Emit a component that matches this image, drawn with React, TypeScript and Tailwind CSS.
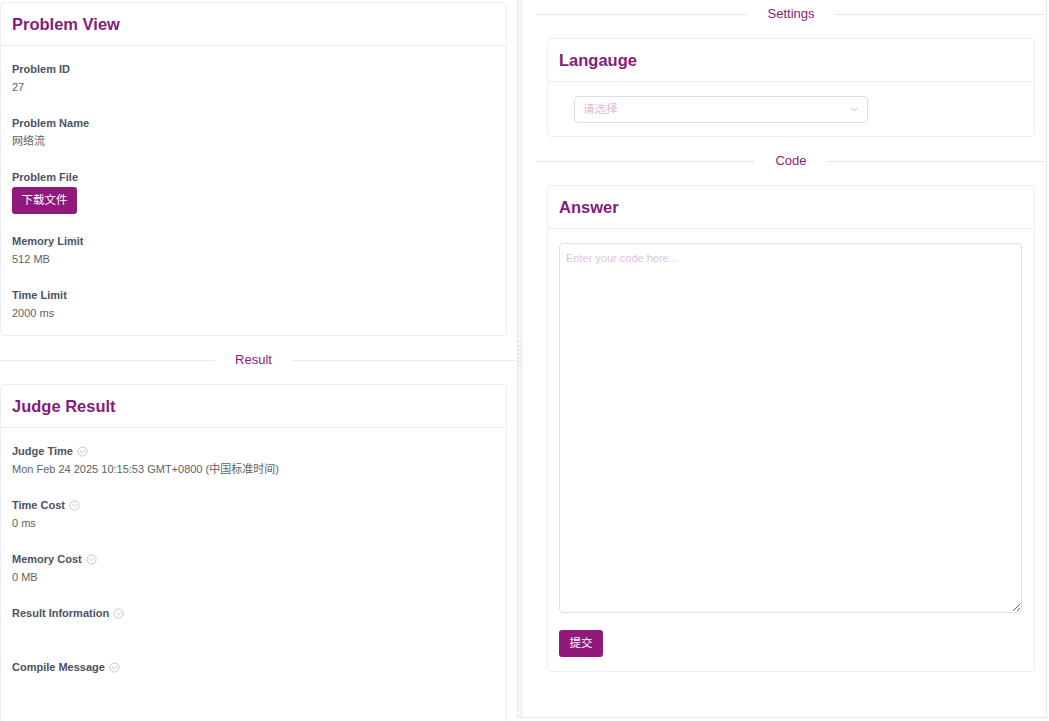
import React from 'react';

const font = { fontFamily: '"Liberation Sans", "Noto Sans CJK SC", sans-serif' };

const HelpIcon: React.FC = () => (
  <svg width="11" height="11" viewBox="0 0 12 12" className="ml-1 inline-block" fill="none">
    <circle cx="6" cy="6" r="5" stroke="#b8bcc6" strokeWidth="0.9" />
    <path d="M3.8 5.2 L6 7.3 L8.2 5.2" stroke="#b8bcc6" strokeWidth="0.9" strokeLinecap="round" strokeLinejoin="round" />
  </svg>
);

const Divider: React.FC<{ label: string; className?: string; tail?: boolean }> = ({ label, className, tail }) => (
  <div className={`flex items-center h-[20px] ${className ?? ''}`}>
    <div className="flex-1 h-px bg-[#e8eaee]" />
    <span className="px-5 text-[13px] leading-[20px] text-[#8a1c80]">{label}</span>
    <div className="flex-1 h-px bg-[#e8eaee]" />
    {tail && <div className="w-[10px] h-px bg-[#e8eaee]" />}
  </div>
);

const Card: React.FC<{ title: string; className?: string; bodyClass?: string; children: React.ReactNode }> = ({
  title,
  className,
  bodyClass,
  children,
}) => (
  <div className={`bg-white border border-[#ebeef5] rounded-[4px] ${className ?? ''}`}>
    <div className="h-[43px] pl-[11px] pr-3 flex items-center border-b border-[#ebeef5]">
      <h2 className="text-[16.5px] font-bold text-[#861b7e]">{title}</h2>
    </div>
    <div className={bodyClass ?? 'pl-[11px] pr-3 pt-[14px] pb-[13px]'}>{children}</div>
  </div>
);

const Field: React.FC<{ label: string; help?: boolean; last?: boolean; children?: React.ReactNode }> = ({
  label,
  help,
  last,
  children,
}) => (
  <div className={last ? '' : 'mb-[18px]'}>
    <div className="flex items-center h-[18px] text-[11px] font-bold text-[#4b5263]">
      {label}
      {help && <HelpIcon />}
    </div>
    <div className="min-h-[18px] text-[11px] leading-[18px] text-[#606266]">{children}</div>
  </div>
);

const PurpleButton: React.FC<{ label: string; className?: string }> = ({ label, className }) => (
  <button
    className={`h-[27px] rounded-[3px] bg-[#8f1a7b] text-white text-[11.5px] flex items-center justify-center ${className ?? ''}`}
  >
    {label}
  </button>
);

const App: React.FC = () => {
  return (
    <div className="w-[1049px] h-[721px] flex bg-white overflow-hidden" style={font}>
      {/* Left pane */}
      <div className="w-[517px] h-full overflow-hidden pt-[2px]">
        <Card title="Problem View" className="mr-[10px]">
          <Field label="Problem ID">27</Field>
          <Field label="Problem Name">网络流</Field>
          <div className="mb-[18px]">
            <div className="flex items-center h-[18px] text-[11px] font-bold text-[#4b5263]">Problem File</div>
            <PurpleButton label="下载文件" className="w-[65px] mt-px" />
          </div>
          <Field label="Memory Limit">512 MB</Field>
          <Field label="Time Limit" last>
            2000 ms
          </Field>
        </Card>

        <Divider label="Result" className="mt-[14px] mb-[14px]" tail />

        <Card title="Judge Result" className="mr-[10px]" bodyClass="pl-[11px] pr-3 pt-[14px] pb-[60px]">
          <Field label="Judge Time" help>
            Mon Feb 24 2025 10:15:53 GMT+0800 (中国标准时间)
          </Field>
          <Field label="Time Cost" help>
            0 ms
          </Field>
          <Field label="Memory Cost" help>
            0 MB
          </Field>
          <Field label="Result Information" help />
          <Field label="Compile Message" help last />
        </Card>
      </div>

      {/* Split gutter */}
      <div className="w-[5px] h-[718px] border-x border-b border-[#e6e8ec] bg-[#f8f8fa] flex flex-col items-stretch">
        <div className="mt-[341px] flex flex-col gap-[3px]">
          {[0, 1, 2, 3, 4, 5, 6].map((i) => (
            <div key={i} className="h-px bg-[#d9dce2]" />
          ))}
        </div>
      </div>

      {/* Right pane */}
      <div className="w-[525px] h-[718px] border-r border-b border-[#e6e8ec] pl-[14px]">
        <Divider label="Settings" className="mt-[4px] mb-[14px]" />

        <Card title="Langauge" className="mx-[11px]" bodyClass="pl-[11px] pr-3 pt-[14px] pb-[13px]">
          <div className="ml-[15px] w-[294px] h-[27px] border border-[#dcdfe6] rounded-[4px] px-2 flex items-center justify-between">
            <span className="text-[11.5px] text-[#dcbdd9]">请选择</span>
            <svg width="9" height="9" viewBox="0 0 10 10" fill="none">
              <path d="M2 3.5 L5 6.5 L8 3.5" stroke="#d2a9cf" strokeWidth="1.1" strokeLinecap="round" strokeLinejoin="round" />
            </svg>
          </div>
        </Card>

        <Divider label="Code" className="mt-[14px] mb-[14px]" />

        <Card title="Answer" className="mx-[11px]" bodyClass="pl-[11px] pr-3 pt-[14px] pb-[14px]">
          <textarea
            className="block w-full h-[370px] border border-[#dcdfe6] rounded-[4px] px-[6px] py-[6px] text-[11px] leading-[16px] text-[#606266] placeholder:text-[#dfc4dc] outline-none"
            style={font}
            placeholder="Enter your code here..."
          />
          <PurpleButton label="提交" className="w-[44px] mt-[17px]" />
        </Card>
      </div>
    </div>
  );
};

export default App;
